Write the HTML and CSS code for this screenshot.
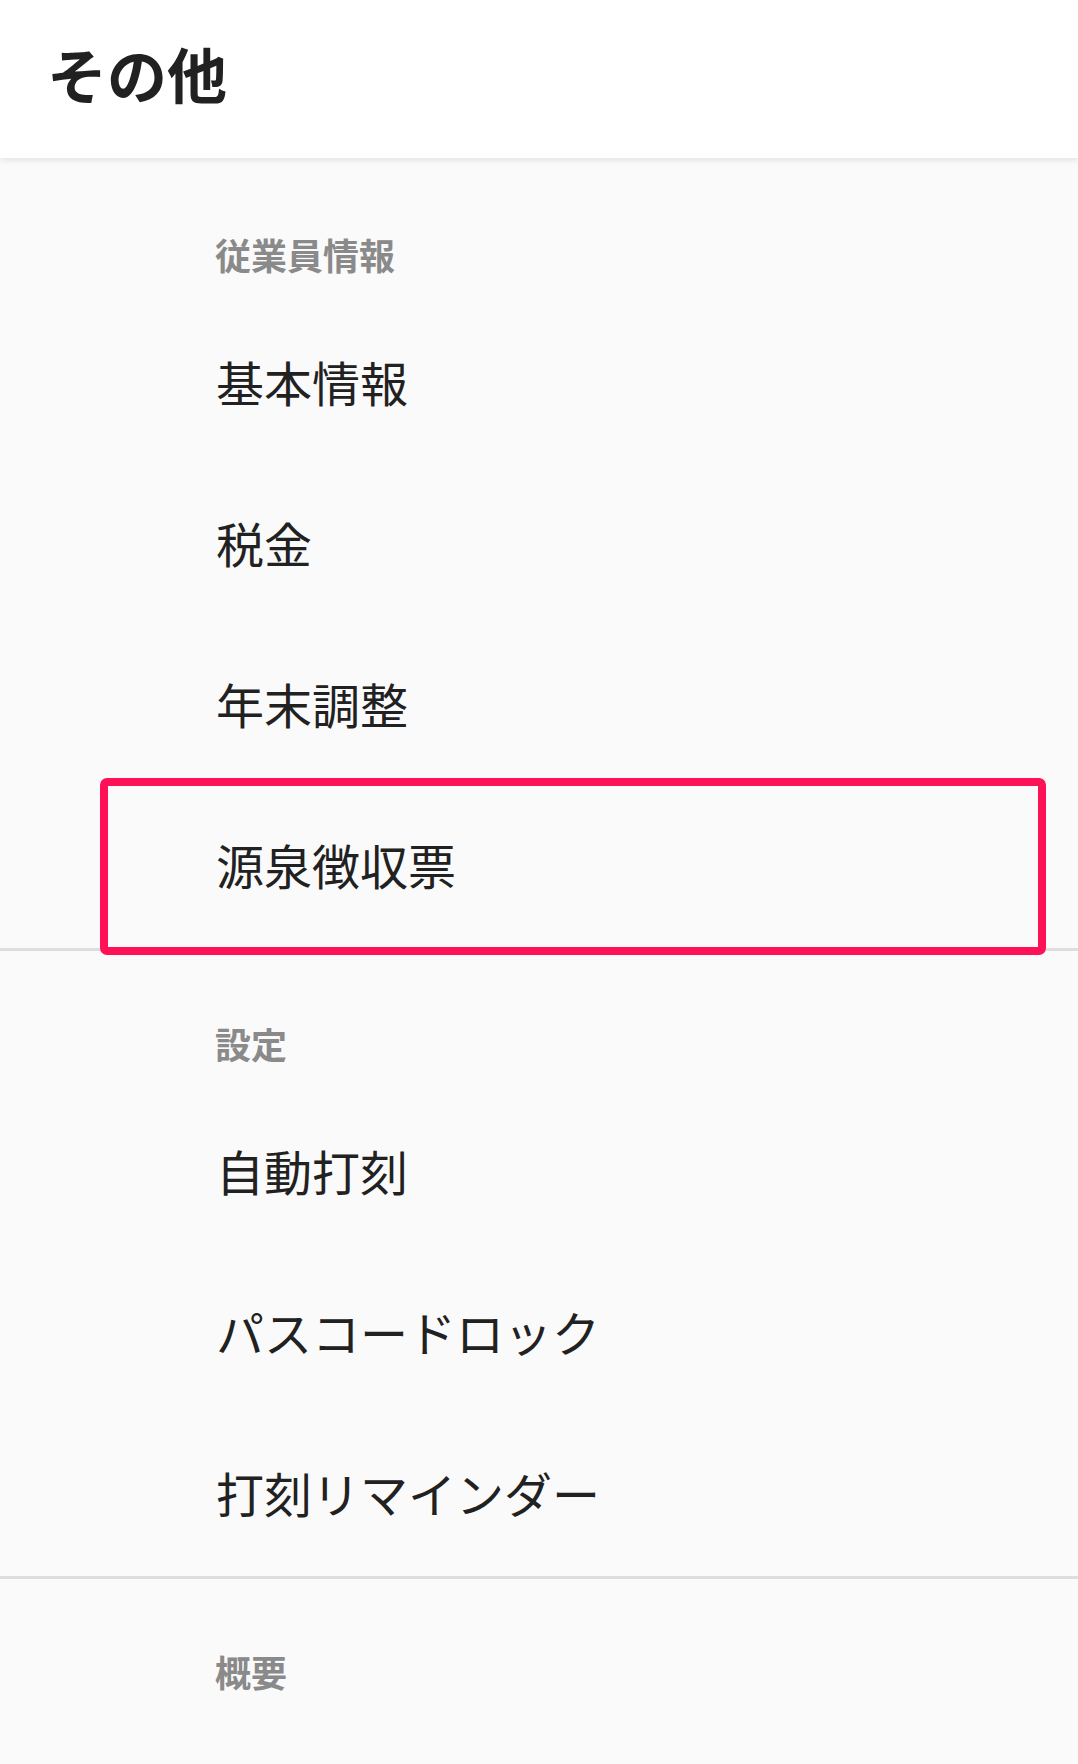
FILE: index.html
```html
<!DOCTYPE html>
<html lang="ja">
<head>
    <meta charset="utf-8" />
    <meta name="viewport" content="width=device-width, initial-scale=1.0">
    <title>その他</title>
    <link rel="stylesheet" href="styles.css">
</head>
<body>
    <header class="app-bar">
        <h1 class="app-title">その他</h1>
    </header>
    <main class="menu">
        <section class="menu-section">
            <h2 class="section-label">従業員情報</h2>
            <div class="menu-item">基本情報</div>
            <div class="menu-item">税金</div>
            <div class="menu-item">年末調整</div>
            <div class="menu-item highlight">源泉徴収票</div>
        </section>
        <section class="menu-section">
            <h2 class="section-label">設定</h2>
            <div class="menu-item">自動打刻</div>
            <div class="menu-item">パスコードロック</div>
            <div class="menu-item">打刻リマインダー</div>
        </section>
        <section class="menu-section">
            <h2 class="section-label">概要</h2>
        </section>
    </main>
</body>
</html>
```

FILE: styles.css
```css
html,
body {
    margin: 0;
    padding: 0;
    background: #fafafa;
}
body {
    font-family: "Noto Sans CJK JP", "Noto Sans", sans-serif;
    color: #212121;
}
.app-bar {
    position: relative;
    z-index: 1;
    height: 158px;
    box-sizing: border-box;
    display: flex;
    align-items: center;
    padding: 0 0 12px 47px;
    background: #ffffff;
    box-shadow: 0 2px 6px rgba(0, 0, 0, 0.1);
}
.app-title {
    margin: 0;
    font-size: 60px;
    font-weight: 700;
    line-height: 1;
    color: #212121;
}
.menu {
    padding-top: 4px;
}
.menu-section {
    border-bottom: 3px solid #dedede;
}
.menu-section:last-child {
    border-bottom: none;
    height: 183px;
}
.section-label {
    margin: 0;
    padding: 68px 0 26px 215px;
    font-size: 36px;
    font-weight: 700;
    line-height: 48px;
    color: #8a8a8a;
}
.menu-item {
    position: relative;
    height: 161px;
    box-sizing: border-box;
    display: flex;
    align-items: center;
    padding: 0 0 8px 216px;
    font-size: 48px;
    line-height: 1;
}
.highlight::after {
    content: "";
    position: absolute;
    top: -9px;
    bottom: -7px;
    left: 100px;
    right: 32px;
    border: 8px solid #ff1158;
    border-radius: 7px;
}
```
